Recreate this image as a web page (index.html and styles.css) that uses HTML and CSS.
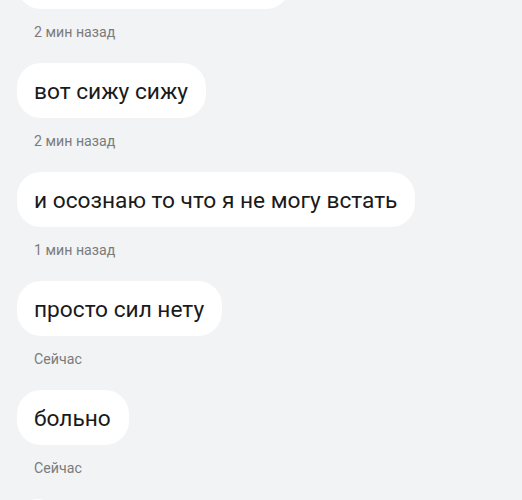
FILE: index.html
```html
<!DOCTYPE html>
<html lang="ru">
<head>
<meta charset="utf-8">
<link rel="stylesheet" href="styles.css">
</head>
<body>
<div class="chat">
  <div class="msg">
    <div class="bubble bubble-first">&nbsp;</div>
    <div class="time">2 мин назад</div>
  </div>
  <div class="msg">
    <div class="bubble">вот сижу сижу</div>
    <div class="time">2 мин назад</div>
  </div>
  <div class="msg">
    <div class="bubble">и осознаю то что я не могу встать</div>
    <div class="time">1 мин назад</div>
  </div>
  <div class="msg">
    <div class="bubble">просто сил нету</div>
    <div class="time">Сейчас</div>
  </div>
  <div class="msg">
    <div class="bubble">больно</div>
    <div class="time">Сейчас</div>
  </div>
  <div class="msg">
    <div class="bubble">&nbsp;</div>
  </div>
</div>
</body>
</html>
```
FILE: styles.css
```css
html, body {
  margin: 0;
  padding: 0;
  background: #f2f3f5;
  overflow: hidden;
  height: 500px;
}
body {
  font-family: Roboto, "Noto Sans", sans-serif;
  color: #1a1a1a;
}
.chat {
  display: flex;
  flex-direction: column;
  align-items: flex-start;
  padding-left: 17px;
  margin-top: -46px;
}
.msg {
  display: flex;
  flex-direction: column;
  align-items: flex-start;
  margin-bottom: 22px;
}
.bubble {
  background: #ffffff;
  height: 55px;
  line-height: 57px;
  padding: 0 18px 0 17px;
  border-radius: 24px;
  font-size: 22.7px;
  white-space: nowrap;
}
.bubble-first {
  width: 238px;
}
.time {
  margin-top: 13px;
  margin-bottom: -1px;
  padding-left: 17px;
  font-size: 14.2px;
  line-height: 20px;
  color: #7b7b7b;
}
```
